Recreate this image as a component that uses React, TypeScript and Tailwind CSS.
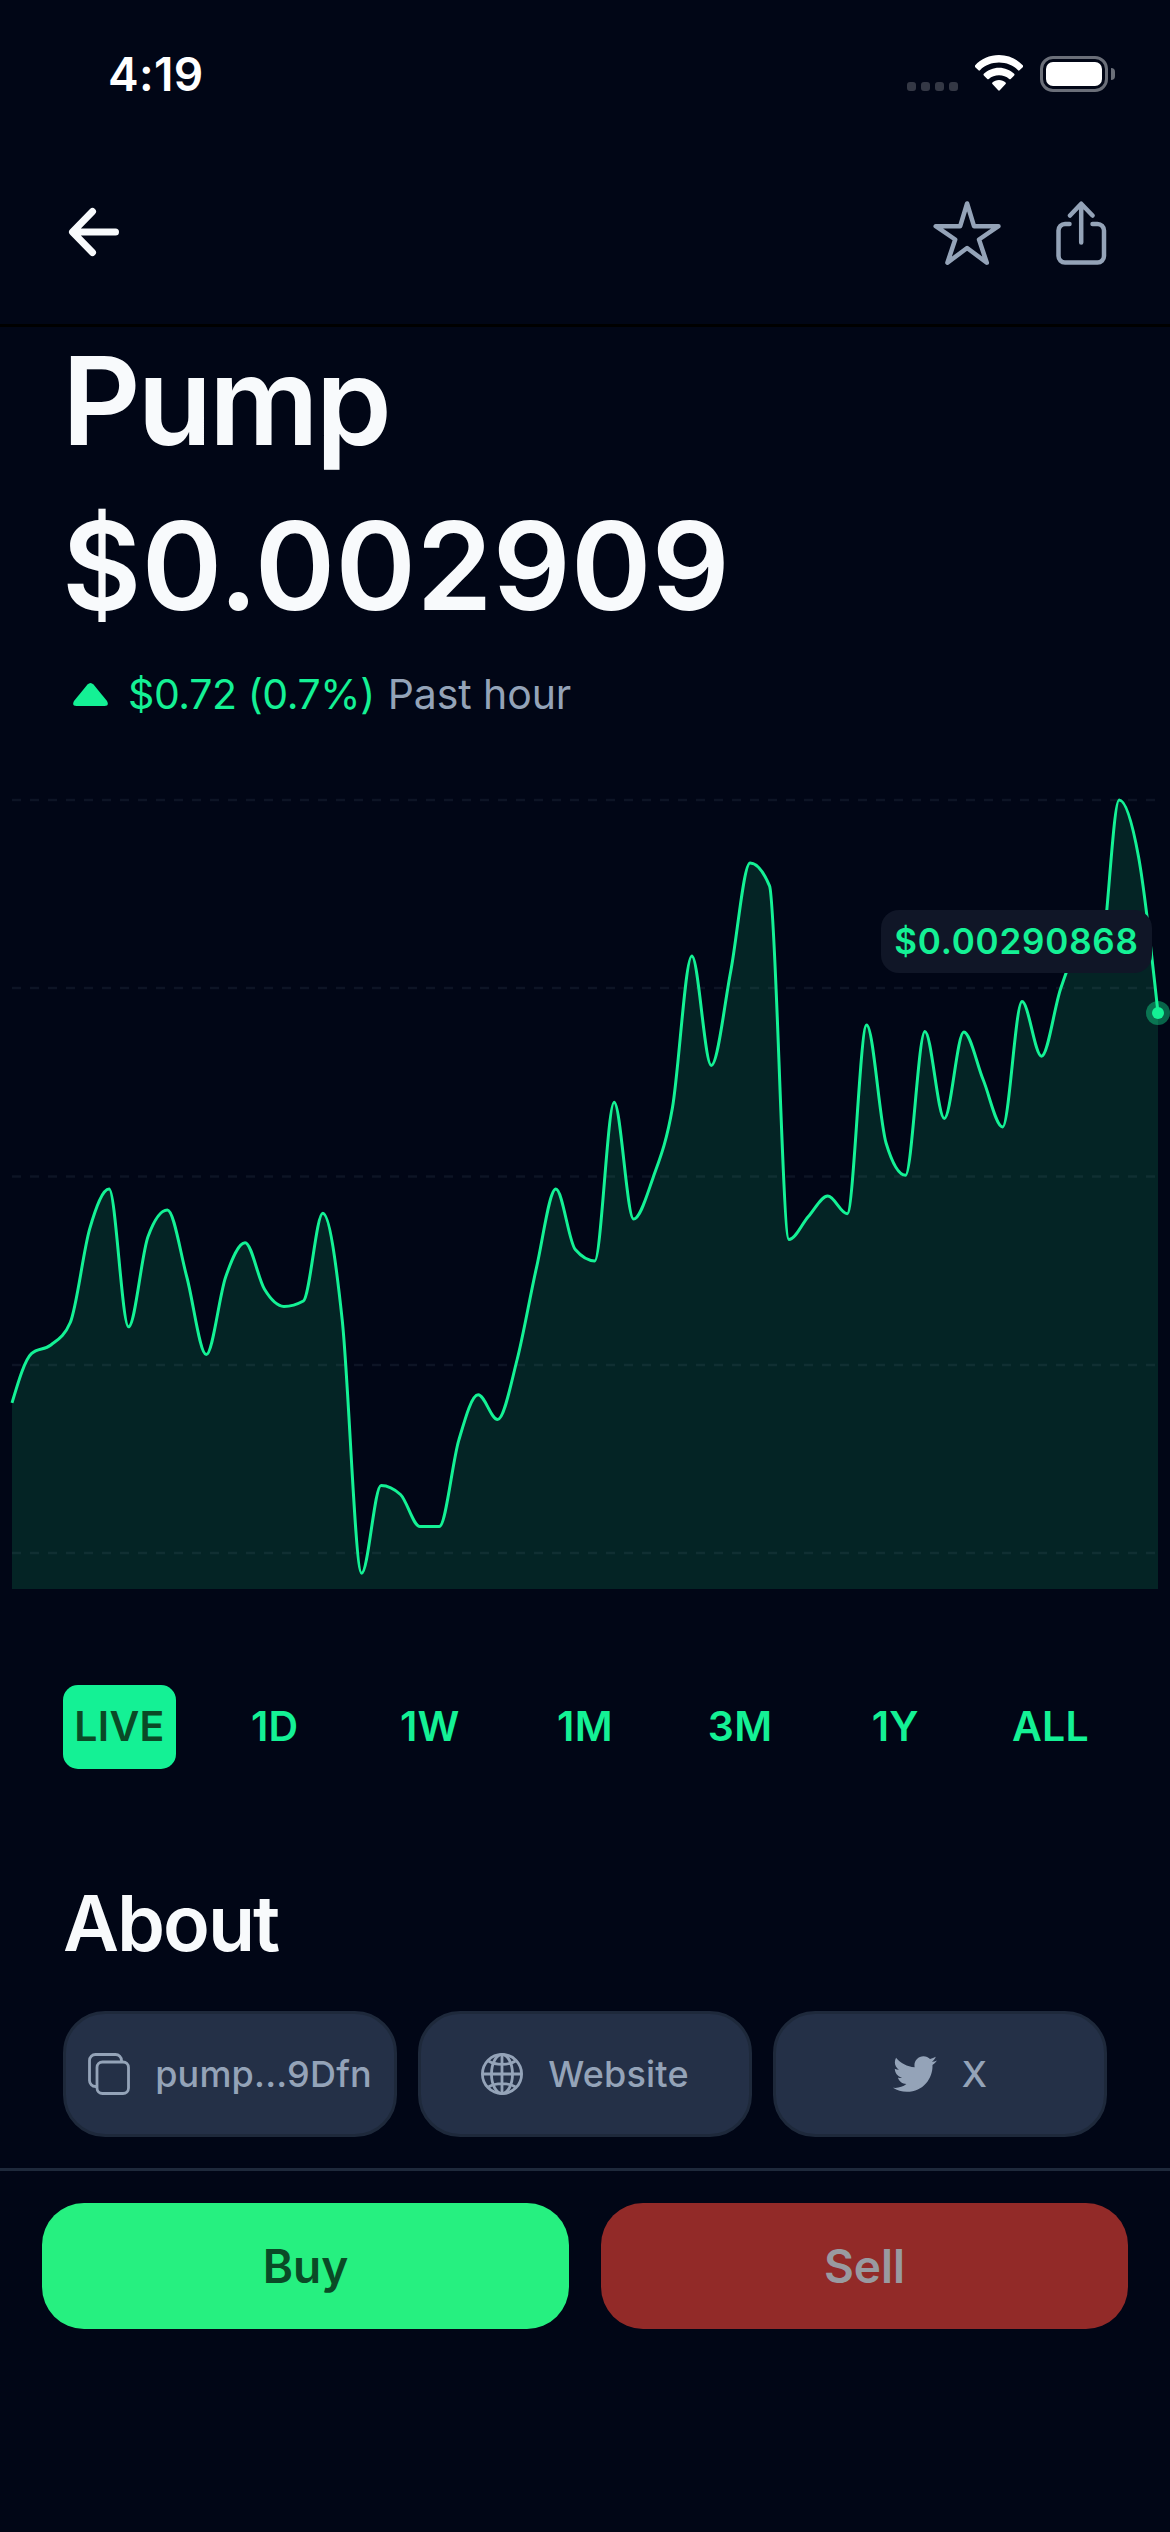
import * as React from "react";
import { FaTwitter } from "react-icons/fa";

const PERIODS = ["LIVE", "1D", "1W", "1M", "3M", "1Y", "ALL"];

const GRID_LINES = [800, 988, 1176.5, 1365, 1553];

// one sample per minute, in chart units (smaller is higher)
const SAMPLES = [
  1402.9, 1353.6, 1345, 1322.5, 1228.8, 1189, 1326.8, 1236.8, 1210, 1277,
  1354.6, 1277, 1242.7, 1289.3, 1306.4, 1301, 1213.2, 1319.8, 1573.2, 1485.4,
  1494.5, 1526.6, 1526.6, 1440.4, 1394.8, 1419.5, 1360, 1267.9, 1189, 1249.6,
  1260.9, 1102.3, 1219, 1177.9, 1108, 956, 1065.4, 971.6, 862.9, 885.9,
  1239.5, 1216.4, 1196, 1213.7, 1025, 1143, 1175.2, 1031.6, 1118.4, 1032,
  1079.8, 1127, 1001.6, 1056.2, 988, 947, 958, 800, 857, 1012.9,
];

const LEFT = 12;
const RIGHT = 1158;
const BOTTOM = 1589;

// monotone cubic interpolation, so the curve never overshoots a sample
function monotonePath(ys: number[]): string {
  const h = (RIGHT - LEFT) / (ys.length - 1);
  const secant = ys.slice(1).map((y, i) => (y - ys[i]) / h);
  const slope = ys.map((_, i) => {
    if (i === 0 || i === ys.length - 1) return 0;
    const a = secant[i - 1];
    const b = secant[i];
    return (Math.sign(a) + Math.sign(b)) * Math.min(Math.abs(a), Math.abs(b), Math.abs(a + b) / 4);
  });
  slope[0] = (3 * secant[0] - slope[1]) / 2;
  slope[ys.length - 1] = (3 * secant[secant.length - 1] - slope[ys.length - 2]) / 2;

  let d = `M${LEFT},${ys[0]}`;
  for (let i = 1; i < ys.length; i++) {
    const x0 = LEFT + (i - 1) * h;
    const x1 = LEFT + i * h;
    d += `C${x0 + h / 3},${ys[i - 1] + (slope[i - 1] * h) / 3},${x1 - h / 3},${ys[i] - (slope[i] * h) / 3},${x1},${ys[i]}`;
  }
  return d;
}

function StatusBar() {
  return (
    <div className="flex h-[147px] items-start justify-between pl-[108px] pr-[55px] pt-[54px]">
      <span className="text-[46px] font-[580] leading-[40px] tracking-[0.3px] text-white">4:19</span>
      <div className="flex items-start">
        <div className="mt-7 flex gap-[5px]">
          {[0, 1, 2, 3].map((i) => (
            <span key={i} className="h-[9px] w-[9px] rounded-[3px] bg-[#343845]" />
          ))}
        </div>
        <svg className="ml-[17px] mt-px" width="48" height="36" viewBox="0 0 48 36" fill="#fff">
          <path d="M24 0C33.300 0 42 3.700 48 10.500C48.400 11 48.400 11.500 48 12L44.500 15.300C44 15.800 43.500 15.700 43 15.200C38 10.300 31.200 7.600 24 7.600S10 10.300 5 15.200C4.500 15.700 4 15.800 3.500 15.300L0 12C-.400 11.500-.400 11 0 10.500C6 3.700 14.700 0 24 0Z" />
          <path d="M24 12.700C29.800 12.700 35.200 15 39.200 18.800C39.700 19.300 39.700 19.900 39.200 20.400L35.700 23.900C35.200 24.400 34.700 24.300 34.200 23.900C31.400 21.500 27.900 20.200 24 20.200S16.600 21.500 13.800 23.900C13.300 24.300 12.800 24.400 12.300 23.900L8.800 20.400C8.300 19.900 8.300 19.300 8.800 18.800C12.800 15 18.200 12.700 24 12.700Z" />
          <path d="M24 25.100C26.600 25.100 28.900 26.100 30.600 27.600C31.100 28.100 31.100 28.600 30.600 29.100L24.800 35.300C24.300 35.900 23.700 35.900 23.200 35.300L17.400 29.100C16.900 28.600 16.900 28.100 17.400 27.600C19.100 26.100 21.400 25.100 24 25.100Z" />
        </svg>
        <div className="ml-[17px] mt-0.5 flex items-center gap-[3px]">
          <div className="h-9 w-[68px] rounded-[13px] border-[3px] border-[#6b6f79] p-[3px]">
            <div className="h-full rounded-[7px] bg-white" />
          </div>
          <div className="h-3 w-1 rounded-r-full bg-[#6b6f79]" />
        </div>
      </div>
    </div>
  );
}

function Header() {
  return (
    <div className="flex h-[180px] items-start justify-between border-b-[3px] border-black pl-[68px] pr-[63px] pt-[52px]">
      <button type="button" className="mt-2">
        <svg width="52" height="50" viewBox="0 0 52 50" fill="none" stroke="#f8fafc" strokeWidth="7" strokeLinecap="round" strokeLinejoin="round">
          <path d="M24.500 4.500L4.500 25L24.500 45.500M5 25H47.500" />
        </svg>
      </button>
      <div className="flex gap-[54px]">
        <svg width="70" height="68" viewBox="932 199 70 68" fill="none" stroke="#94a3b8" strokeWidth="4.500" strokeLinejoin="round">
          <path d="M967.100 203.500L974 226.200H998.500L979 239.500L986.800 262.700L967.100 248L947.400 262.700L955.200 239.500L935.700 226.200H960.200Z" />
        </svg>
        <svg width="51" height="68" viewBox="1056 199 51 68" fill="none" stroke="#94a3b8" strokeWidth="4.500" strokeLinecap="round" strokeLinejoin="round">
          <path d="M1069.500 224H1065A6.500 6.500 0 0 0 1058.500 230.500V256A6.500 6.500 0 0 0 1065 262.500H1097.500A6.500 6.500 0 0 0 1104 256V230.500A6.500 6.500 0 0 0 1097.500 224H1092.500M1081.200 242.500V204M1070 215.500L1081.200 203.700L1092.500 215.500" />
        </svg>
      </div>
    </div>
  );
}

function PriceChart() {
  const line = React.useMemo(() => monotonePath(SAMPLES), []);

  return (
    <div className="relative mt-[33px] h-[849px]">
      <svg className="block" width="1170" height="849" viewBox="0 760 1170 849" fill="none">
        <path d={`${line}V${BOTTOM}H${LEFT}Z`} fill="#042425" />
        {GRID_LINES.map((y) => (
          <path key={y} d={`M${LEFT} ${y}H${RIGHT}`} stroke="#94a3b8" strokeOpacity="0.090" strokeWidth="2.500" strokeDasharray="9 9" />
        ))}
        <path d={line} stroke="#14f195" strokeWidth="3" strokeLinejoin="round" />
        <circle cx={RIGHT} cy="1012.900" r="12" fill="#14f195" fillOpacity="0.400" />
        <circle cx={RIGHT} cy="1012.900" r="6" fill="#14f195" />
      </svg>
      <div className="absolute left-[881px] top-[150px] flex h-[63px] w-[271px] items-center justify-center rounded-[18px] bg-[#101627] text-[35px] font-[580] tracking-[0.8px] text-[#14f195]">
        $0.00290868
      </div>
    </div>
  );
}

function PeriodTabs() {
  const [active, setActive] = React.useState("LIVE");

  return (
    <div className="mt-[76px] flex justify-between px-[63px]">
      {PERIODS.map((p) => (
        <button
          key={p}
          type="button"
          onClick={() => setActive(p)}
          className={
            p === active
              ? "h-[84px] w-[113px] rounded-[15px] bg-[#14f195] text-[41px] font-[560] tracking-[0.3px] text-[#0a4a26]"
              : "h-[84px] w-[113px] rounded-[15px] text-[41px] font-[560] tracking-[0.3px] text-[#14f195]"
          }
        >
          {p}
        </button>
      ))}
    </div>
  );
}

function LinkPill({ icon, label }: { icon: React.ReactNode; label: string }) {
  return (
    <button
      type="button"
      className="flex h-[126px] items-center justify-center gap-[25px] rounded-[42px] border-[3px] border-[#1e293b] bg-[#243047] text-[36px] font-medium tracking-[0.2px] text-[#94a3b8]"
    >
      {icon}
      <span>{label}</span>
    </button>
  );
}

function CopyIcon() {
  return (
    <svg width="42" height="42" viewBox="0 0 42 42" fill="none" stroke="currentColor" strokeWidth="2.800">
      <rect x="9" y="9" width="31.500" height="31.500" rx="5.500" />
      <path d="M33.500 9V7.500A6 6 0 0 0 27.500 1.500H7.500A6 6 0 0 0 1.500 7.500V27.500A6 6 0 0 0 7.500 33.500H9" />
    </svg>
  );
}

function GlobeIcon() {
  return (
    <svg width="42" height="42" viewBox="0 0 42 42" fill="none" stroke="currentColor" strokeWidth="2.800">
      <circle cx="21" cy="21" r="19.600" />
      <ellipse cx="21" cy="21" rx="10.500" ry="19.500" />
      <path d="M21 1.500V40.500M1.500 21H40.500M7.500 8C14.500 12.500 27.500 12.500 34.500 8M7.500 34C14.500 29.500 27.500 29.500 34.500 34" />
    </svg>
  );
}

export default function App() {
  return (
    <div className="flex h-[2532px] w-[1170px] flex-col overflow-hidden bg-[#010616] font-['Inter',sans-serif]">
      <StatusBar />
      <Header />

      <div className="pl-[62px] text-[#f8fafc]">
        <h1 className="-mt-px text-[122px] font-[560] leading-[150px] tracking-[-3.2px]">Pump</h1>
        <p className="mt-[15px] text-[122px] font-[560] leading-[150px] tracking-[0.3px]">$0.002909</p>
      </div>
      <div className="mt-[21px] flex h-[65px] items-center pl-[73px] text-[41px]">
        <svg width="35" height="23" viewBox="0 0 35 23" fill="#14f195">
          <path d="M14.500 1.500Q17.500-1.500 20.500 1.500L34 18Q36.500 23 31.500 23H3.500Q-1.500 23 1 18Z" />
        </svg>
        <span className="ml-5 tracking-[-0.4px] text-[#14f195]">$0.72 (0.7%)</span>
        <span className="ml-[13px] tracking-[-0.1px] text-[#94a3b8]">Past hour</span>
      </div>

      <PriceChart />
      <PeriodTabs />

      <div className="mt-[104px] px-[63px]">
        <h2 className="text-[77px] font-[560] leading-[100px] tracking-[-2px] text-[#f8fafc]">About</h2>
        <div className="mt-[38px] grid grid-cols-3 gap-[21px]">
          <LinkPill icon={<CopyIcon />} label="pump...9Dfn" />
          <LinkPill icon={<GlobeIcon />} label="Website" />
          <LinkPill icon={<FaTwitter size={44} />} label="X" />
        </div>
      </div>

      <div className="mt-[31px] grid grid-cols-2 gap-8 border-t-[3px] border-[#1e293b] px-[42px] pt-8">
        <button type="button" className="h-[126px] rounded-[42px] bg-[#26f080] text-[46px] font-[580] text-[#0a4a26]">
          Buy
        </button>
        <button type="button" className="h-[126px] rounded-[42px] bg-[#922a28] text-[46px] font-[580] text-[#999aa0]">
          Sell
        </button>
      </div>
    </div>
  );
}
